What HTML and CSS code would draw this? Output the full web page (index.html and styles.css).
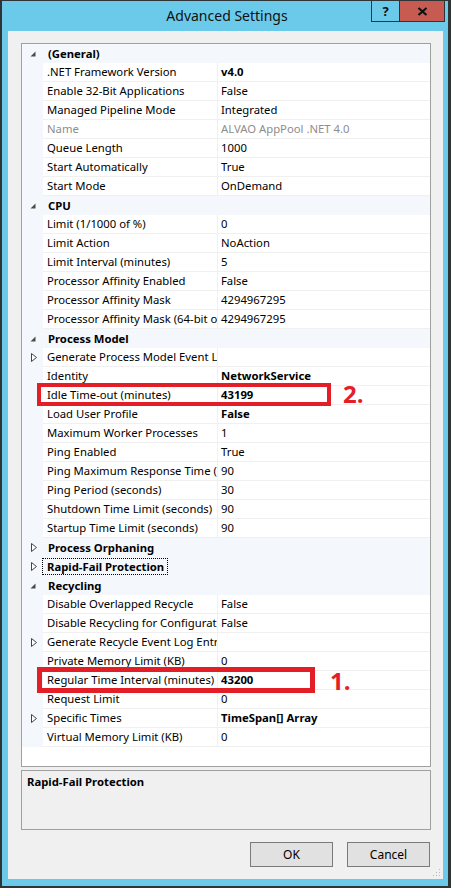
FILE: index.html
```html
<!DOCTYPE html>
<html>
<head>
<meta charset="utf-8">
<link rel="stylesheet" href="styles.css">
</head>
<body>
<div class="window">
  <div class="titlebar">
    <div class="title">Advanced Settings</div>
    <div class="caption-btns">
      <div class="cbtn help">?</div>
      <div class="cbtn close"><svg width="11" height="9" viewBox="0 0 11 9"><path d="M1.5 1 L9.5 8 M9.5 1 L1.5 8" stroke="#111" stroke-width="2.2" fill="none"/></svg></div>
    </div>
  </div>
  <div class="client">
    <div class="grid">
      <div class="row group"><div class="gut"><svg class="exp" width="6" height="6" viewBox="0 0 6 6"><polygon points="5.5,0.5 5.5,5.5 0.5,5.5"/></svg></div><div class="gname">(General)</div></div>
      <div class="row"><div class="gut"></div><div class="name">.NET Framework Version</div><div class="val b">v4.0</div></div>
      <div class="row"><div class="gut"></div><div class="name">Enable 32-Bit Applications</div><div class="val">False</div></div>
      <div class="row"><div class="gut"></div><div class="name">Managed Pipeline Mode</div><div class="val">Integrated</div></div>
      <div class="row dis"><div class="gut"></div><div class="name">Name</div><div class="val">ALVAO AppPool .NET 4.0</div></div>
      <div class="row"><div class="gut"></div><div class="name">Queue Length</div><div class="val">1000</div></div>
      <div class="row"><div class="gut"></div><div class="name">Start Automatically</div><div class="val">True</div></div>
      <div class="row"><div class="gut"></div><div class="name">Start Mode</div><div class="val">OnDemand</div></div>
      <div class="row group"><div class="gut"><svg class="exp" width="6" height="6" viewBox="0 0 6 6"><polygon points="5.5,0.5 5.5,5.5 0.5,5.5"/></svg></div><div class="gname">CPU</div></div>
      <div class="row"><div class="gut"></div><div class="name">Limit (1/1000 of %)</div><div class="val">0</div></div>
      <div class="row"><div class="gut"></div><div class="name">Limit Action</div><div class="val">NoAction</div></div>
      <div class="row"><div class="gut"></div><div class="name">Limit Interval (minutes)</div><div class="val">5</div></div>
      <div class="row"><div class="gut"></div><div class="name">Processor Affinity Enabled</div><div class="val">False</div></div>
      <div class="row"><div class="gut"></div><div class="name">Processor Affinity Mask</div><div class="val">4294967295</div></div>
      <div class="row"><div class="gut"></div><div class="name">Processor Affinity Mask (64-bit o</div><div class="val">4294967295</div></div>
      <div class="row group"><div class="gut"><svg class="exp" width="6" height="6" viewBox="0 0 6 6"><polygon points="5.5,0.5 5.5,5.5 0.5,5.5"/></svg></div><div class="gname">Process Model</div></div>
      <div class="row"><div class="gut"><svg class="col" width="6" height="9" viewBox="0 0 6 9"><polygon points="0.5,0.5 5.5,4.5 0.5,8.5"/></svg></div><div class="name">Generate Process Model Event L</div><div class="val"></div></div>
      <div class="row"><div class="gut"></div><div class="name">Identity</div><div class="val b">NetworkService</div></div>
      <div class="row"><div class="gut"></div><div class="name">Idle Time-out (minutes)</div><div class="val b">43199</div></div>
      <div class="row"><div class="gut"></div><div class="name">Load User Profile</div><div class="val b">False</div></div>
      <div class="row"><div class="gut"></div><div class="name">Maximum Worker Processes</div><div class="val">1</div></div>
      <div class="row"><div class="gut"></div><div class="name">Ping Enabled</div><div class="val">True</div></div>
      <div class="row"><div class="gut"></div><div class="name">Ping Maximum Response Time (</div><div class="val">90</div></div>
      <div class="row"><div class="gut"></div><div class="name">Ping Period (seconds)</div><div class="val">30</div></div>
      <div class="row"><div class="gut"></div><div class="name">Shutdown Time Limit (seconds)</div><div class="val">90</div></div>
      <div class="row"><div class="gut"></div><div class="name">Startup Time Limit (seconds)</div><div class="val">90</div></div>
      <div class="row group"><div class="gut"><svg class="col" width="6" height="9" viewBox="0 0 6 9"><polygon points="0.5,0.5 5.5,4.5 0.5,8.5"/></svg></div><div class="gname">Process Orphaning</div></div>
      <div class="row group"><div class="gut"><svg class="col" width="6" height="9" viewBox="0 0 6 9"><polygon points="0.5,0.5 5.5,4.5 0.5,8.5"/></svg></div><div class="gname focus">Rapid-Fail Protection</div></div>
      <div class="row group"><div class="gut"><svg class="exp" width="6" height="6" viewBox="0 0 6 6"><polygon points="5.5,0.5 5.5,5.5 0.5,5.5"/></svg></div><div class="gname">Recycling</div></div>
      <div class="row"><div class="gut"></div><div class="name">Disable Overlapped Recycle</div><div class="val">False</div></div>
      <div class="row"><div class="gut"></div><div class="name">Disable Recycling for Configurat</div><div class="val">False</div></div>
      <div class="row"><div class="gut"><svg class="col" width="6" height="9" viewBox="0 0 6 9"><polygon points="0.5,0.5 5.5,4.5 0.5,8.5"/></svg></div><div class="name">Generate Recycle Event Log Entr</div><div class="val"></div></div>
      <div class="row"><div class="gut"></div><div class="name">Private Memory Limit (KB)</div><div class="val">0</div></div>
      <div class="row"><div class="gut"></div><div class="name">Regular Time Interval (minutes)</div><div class="val b">43200</div></div>
      <div class="row"><div class="gut"></div><div class="name">Request Limit</div><div class="val">0</div></div>
      <div class="row"><div class="gut"><svg class="col" width="6" height="9" viewBox="0 0 6 9"><polygon points="0.5,0.5 5.5,4.5 0.5,8.5"/></svg></div><div class="name">Specific Times</div><div class="val b">TimeSpan[] Array</div></div>
      <div class="row"><div class="gut"></div><div class="name">Virtual Memory Limit (KB)</div><div class="val">0</div></div>
    </div>
    <div class="desc"><div class="desc-title">Rapid-Fail Protection</div></div>
    <div class="buttons">
      <div class="btn">OK</div>
      <div class="btn">Cancel</div>
    </div>
    <svg class="grip" width="8" height="8" viewBox="0 0 8 8"><g fill="#b8b8b8"><rect x="6" y="0" width="1" height="1"/><rect x="3" y="3" width="1" height="1"/><rect x="6" y="3" width="1" height="1"/><rect x="0" y="6" width="1" height="1"/><rect x="3" y="6" width="1" height="1"/><rect x="6" y="6" width="1" height="1"/></g></svg>
  </div>
  <div class="mark mark2"></div>
  <div class="mark-label label2">2.</div>
  <div class="mark mark1"></div>
  <div class="mark-label label1">1.</div>
</div>
</body>
</html>
```

FILE: styles.css
```css
* { box-sizing: border-box; }
html, body { margin: 0; padding: 0; }
body {
  width: 451px;
  height: 888px;
  overflow: hidden;
  font-family: "Noto Sans", "Open Sans", sans-serif;
  font-size: 11.3px;
  color: #000;
  background: #6bcaea;
}
.window {
  position: relative;
  width: 451px;
  height: 888px;
  background: #6bcaea;
  border-left: 2px solid #2f3437;
  border-right: 3px solid #2f3437;
  border-bottom: 2px solid #2f3437;
  display: flex;
  flex-direction: column;
}
.titlebar {
  height: 31px;
  border-top: 1px solid #2f3437;
  display: grid;
  grid-template-columns: 1fr;
  grid-template-rows: 30px;
}
.title {
  grid-area: 1 / 1;
  justify-self: center;
  align-self: center;
  font-size: 14px;
  color: #111;
  margin-left: 4px;
  margin-top: -1px;
}
.caption-btns {
  grid-area: 1 / 1;
  justify-self: end;
  align-self: start;
  display: flex;
  margin-top: -1px;
  margin-right: 3px;
}
.cbtn {
  height: 22px;
  border: 1px solid #2f3437;
  display: flex;
  align-items: center;
  justify-content: center;
}
.help {
  width: 29px;
  font-weight: bold;
  font-size: 13px;
  color: #111;
  background: #6bcaea;
}
.close {
  width: 46px;
  margin-left: -1px;
  background: #c75b52;
}
.client {
  position: relative;
  margin: 0 5px 7px 6px;
  height: 848px;
  background: #f0f0f0;
  padding: 12px 12px 0 13px;
  display: flex;
  flex-direction: column;
}
.grid {
  height: 724px;
  border: 1px solid #a0a0a0;
  background: #fff;
  display: flex;
  flex-direction: column;
}
.row {
  height: 19px;
  display: grid;
  grid-template-columns: 21px 175px 1fr;
  flex: none;
}
.gut {
  background: #f4f7fc;
  display: flex;
  align-items: center;
  padding-left: 8px;
}
.gut .col { margin-left: 1px; }
.exp polygon { fill: #4a4a4a; }
.col polygon { fill: #fff; stroke: #444; stroke-width: 1; }
.name, .val {
  white-space: nowrap;
  overflow: hidden;
  line-height: 18px;
  border-bottom: 1px solid #f0f0f0;
  background: #fff;
}
.name {
  padding-left: 4px;
  border-right: 1px solid #f0f0f0;
}
.val { padding-left: 3px; }
.b { font-weight: bold; }
.dis .name, .dis .val { color: #8d8d8d; }
.group { background: #f4f7fc; }
.gname {
  grid-column: 2 / 4;
  justify-self: start;
  font-weight: bold;
  line-height: 15px;
  height: 17px;
  margin-top: 1px;
  padding: 0 3px 0 4px;
  border: 1px solid transparent;
  white-space: nowrap;
}
.focus { border: 1px dotted #000; margin-left: -1px; }
.desc {
  margin-top: 3px;
  height: 60px;
  border: 1px solid #a0a0a0;
  padding: 3px 5px;
}
.desc-title { font-weight: bold; }
.buttons {
  margin-top: 12px;
  display: flex;
  justify-content: flex-end;
  gap: 14px;
  margin-right: 1px;
}
.btn {
  width: 83px;
  height: 25px;
  background: #e1e1e1;
  border: 1px solid #7a7a7a;
  display: flex;
  align-items: center;
  justify-content: center;
  font-size: 12px;
}
.grip {
  position: absolute;
  right: 2px;
  bottom: 2px;
}
.mark {
  position: absolute;
  border: 4px solid #e41e26;
}
.mark2 { left: 35px; top: 383px; width: 294px; height: 23px; }
.mark1 { left: 35px; top: 667px; width: 278px; height: 26px; border-width: 5px; }
.mark-label {
  position: absolute;
  font-family: "Open Sans", "Noto Sans", sans-serif;
  font-weight: bold;
  font-size: 24px;
  line-height: 24px;
  color: #e41e26;
}
.label2 { left: 341px; top: 382px; }
.label1 { left: 328px; top: 669px; }
```
